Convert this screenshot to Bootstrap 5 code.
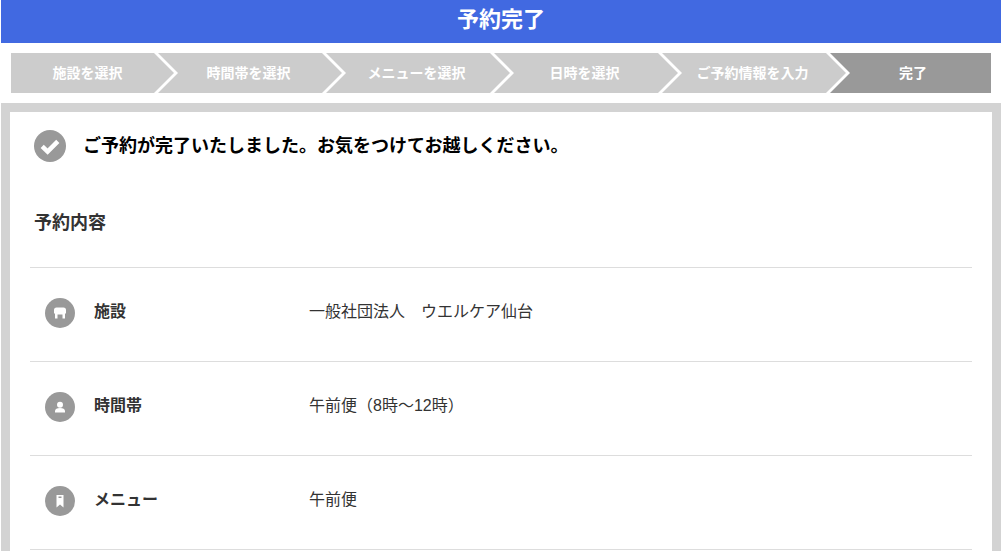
<!DOCTYPE html>
<html lang="ja">
  <head>
    <meta charset="UTF-8" />
    <meta name="viewport" content="width=device-width, initial-scale=1.0" />
    <title>予約完了</title>
    <link
      href="https://cdn.jsdelivr.net/npm/bootstrap@5.3.0/dist/css/bootstrap.min.css"
      rel="stylesheet"
    />
    <style>
      html, body { overflow: hidden; }
      body {
        font-family: "Liberation Sans", "Noto Sans CJK JP", sans-serif;
        color: #333;
        padding-left: 1px;
        background: #fff;
      }
      .page-head {
        height: 43px;
        background: #4169e1;
        font-size: 22px;
        line-height: 40px;
      }
      .steps { padding: 10px; }
      .step {
        height: 40px;
        width: 184px;
        margin-left: -16px;
        padding-right: 3px;
        background: #ccc;
        font-size: 14px;
        font-weight: 700;
        clip-path: polygon(0 0, 164px 0, 184px 20px, 164px 40px, 0 40px, 20px 20px);
      }
      .step:first-child {
        width: 163px;
        margin-left: 0;
        padding-right: 10px;
        clip-path: polygon(0 0, 143px 0, 163px 20px, 143px 40px, 0 40px);
      }
      .step:last-child {
        width: 161px;
        padding-left: 5px;
        padding-right: 0;
        background: #999;
        clip-path: polygon(0 0, 100% 0, 100% 100%, 0 100%, 20px 20px);
      }
      .sheet-wrap {
        background: #d3d3d3;
        padding: 9px;
      }
      .sheet {
        background: #fff;
        padding: 18px 20px 60px 20px;
      }
      .done-msg {
        height: 32px;
        padding-left: 4px;
        gap: 17px;
        color: #000;
        font-size: 18px;
        font-weight: 700;
      }
      .done-icon { width: 32px; height: 32px; flex: none; }
      .sheet-title {
        margin: 49px 0 0;
        padding: 0 0 32px 4px;
        font-size: 18px;
        line-height: 24px;
        font-weight: 700;
        border-bottom: 1px solid #ddd;
      }
      .info-row {
        height: 94px;
        padding: 0 0 3px 15px;
        border-bottom: 1px solid #ddd;
        font-size: 16px;
      }
      .info-icon { width: 30px; height: 30px; flex: none; }
      .info-label { width: 234px; padding-left: 19px; font-weight: 700; margin-bottom: 2px; }
      .info-value { margin-bottom: 2px; }
    </style>
  </head>
  <body>
    <h1 class="page-head m-0 text-center text-white fw-bold">予約完了</h1>

    <!-- steps -->
    <div class="steps d-flex">
      <div class="step d-flex align-items-center justify-content-center text-white">施設を選択</div>
      <div class="step d-flex align-items-center justify-content-center text-white">時間帯を選択</div>
      <div class="step d-flex align-items-center justify-content-center text-white">メニューを選択</div>
      <div class="step d-flex align-items-center justify-content-center text-white">日時を選択</div>
      <div class="step d-flex align-items-center justify-content-center text-white">ご予約情報を入力</div>
      <div class="step d-flex align-items-center justify-content-center text-white">完了</div>
    </div>

    <div class="sheet-wrap">
      <div class="sheet">
        <div class="done-msg d-flex align-items-center">
          <svg class="done-icon" viewBox="0 0 32 32">
            <circle cx="16" cy="16" r="16" fill="#999" />
            <path d="M8.200 16.400l5.400 5.200 10.200-10.200" fill="none" stroke="#fff" stroke-width="4.500" />
          </svg>
          <span>ご予約が完了いたしました。お気をつけてお越しください。</span>
        </div>

        <h2 class="sheet-title">予約内容</h2>

        <div class="info-row d-flex align-items-center">
          <svg class="info-icon" viewBox="0 0 30 30">
            <circle cx="15" cy="15" r="15" fill="#999" />
            <path d="M11.500 9.500h7a2.500 2.500 0 0 1 2.500 2.500v3.500h-1v5h-2.500v-4h-5v4H10v-5H9V12a2.500 2.500 0 0 1 2.500-2.500z" fill="#fff" />
          </svg>
          <div class="info-label">施設</div>
          <div class="info-value">一般社団法人　ウエルケア仙台</div>
        </div>

        <div class="info-row d-flex align-items-center">
          <svg class="info-icon" viewBox="0 0 30 30">
            <circle cx="15" cy="15" r="15" fill="#999" />
            <circle cx="15" cy="12.800" r="3" fill="#fff" />
            <path d="M10 20.500v-1.500c0-1.800 2-3 5-3s5 1.200 5 3v1.500z" fill="#fff" />
          </svg>
          <div class="info-label">時間帯</div>
          <div class="info-value">午前便（8時～12時）</div>
        </div>

        <div class="info-row d-flex align-items-center">
          <svg class="info-icon" viewBox="0 0 30 30">
            <circle cx="15" cy="15" r="15" fill="#999" />
            <path d="M11.500 9h7v12.500l-3.500-3-3.500 3z" fill="#fff" />
            <rect x="13.500" y="10.500" width="3" height="1.500" fill="#999" />
          </svg>
          <div class="info-label">メニュー</div>
          <div class="info-value">午前便</div>
        </div>
      </div>
    </div>
  </body>
</html>
